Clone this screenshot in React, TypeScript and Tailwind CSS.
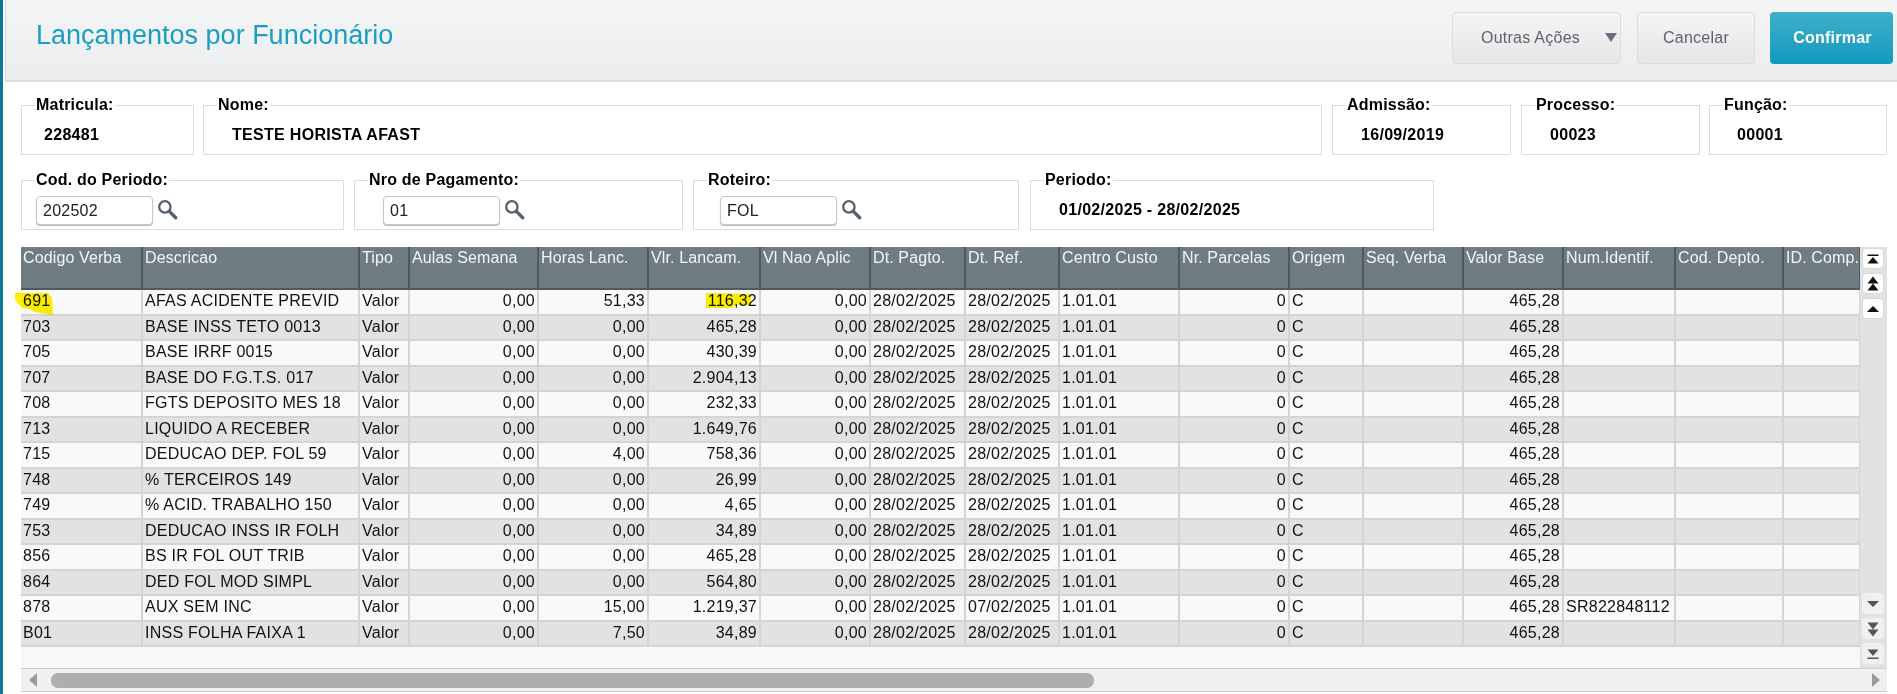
const cols = ["w-[121px]","w-[217px]","w-[50px]","w-[129px]","w-[110px]","w-[112px]","w-[110px]","w-[95px]","w-[94px]","w-[120px]","w-[110px]","w-[74px]","w-[100px]","w-[100px]","w-[112px]","w-[108px]","w-[77px]"];
const heads = ["Codigo Verba","Descricao","Tipo","Aulas Semana","Horas Lanc.","Vlr. Lancam.","Vl Nao Aplic","Dt. Pagto.","Dt. Ref.","Centro Custo","Nr. Parcelas","Origem","Seq. Verba","Valor Base","Num.Identif.","Cod. Depto.","ID. Comp."];
const right = new Set([3,4,5,6,10,13]);
const rows: any[] = [
["691","AFAS ACIDENTE PREVID","51,33","116,32","28/02/2025"],
["703","BASE INSS TETO 0013","0,00","465,28","28/02/2025"],
["705","BASE IRRF 0015","0,00","430,39","28/02/2025"],
["707","BASE DO F.G.T.S. 017","0,00","2.904,13","28/02/2025"],
["708","FGTS DEPOSITO MES 18","0,00","232,33","28/02/2025"],
["713","LIQUIDO A RECEBER","0,00","1.649,76","28/02/2025"],
["715","DEDUCAO DEP. FOL 59","4,00","758,36","28/02/2025"],
["748","% TERCEIROS 149","0,00","26,99","28/02/2025"],
["749","% ACID. TRABALHO 150","0,00","4,65","28/02/2025"],
["753","DEDUCAO INSS IR FOLH","0,00","34,89","28/02/2025"],
["856","BS IR FOL OUT TRIB","0,00","465,28","28/02/2025"],
["864","DED FOL MOD SIMPL","0,00","564,80","28/02/2025"],
["878","AUX SEM INC","15,00","1.219,37","07/02/2025","SR822848112"],
["B01","INSS FOLHA FAIXA 1","7,50","34,89","28/02/2025"],
];

function Label({text}:{text:string}){
  return <span className="absolute left-[13px] top-[-9px] bg-white px-[1px] text-[16px] leading-[16px] font-bold tracking-[0.2px] text-black whitespace-nowrap">{text}</span>;
}
function Field({label,value,w,indent}:{label:string;value:string;w:string;indent:string}){
  return <div className={`${w} h-[50px] border border-[#dcdcdc] relative shrink-0 ${indent} pt-[19px]`}>
    <Label text={label}/>
    <div className="text-[16px] font-bold tracking-[0.3px] text-black leading-[20px] whitespace-nowrap">{value}</div>
  </div>;
}
function Lens(){
  return <svg width="21" height="21" viewBox="0 0 20 20" className="ml-[4px] shrink-0 mb-[2px]"><circle cx="7.5" cy="7.5" r="5.4" fill="#fff" stroke="#556070" strokeWidth="2.2"/><path d="M11.8 11.8l6 6" stroke="#556070" strokeWidth="3.2" strokeLinecap="round"/></svg>;
}
function Search({label,value,w,indent}:{label:string;value:string;w:string;indent:string}){
  return <div className={`${w} h-[50px] border border-[#dcdcdc] relative shrink-0 ${indent} pt-[15px]`}>
    <Label text={label}/>
    <div className="flex items-center">
      <div className="w-[117px] h-[29px] border border-[#c4c8cc] rounded-[4px] bg-white text-[16px] tracking-[0.25px] leading-[27px] px-[6px] text-[#222] shadow-[0_1px_1px_#bbb]">{value}</div>
      <Lens/>
    </div>
  </div>;
}
function SBtn({d,light}:{d:string;light?:boolean}){
  return <div className={`w-[22px] h-[21px] rounded-[4px] flex items-center justify-center ${light?"bg-[#f0f0f0]":"bg-white border border-[#d8d8d8]"}`}>
    <svg width="16" height="16" viewBox="0 0 16 16"><path d={d} fill={light?"#555":"#111"}/></svg>
  </div>;
}
export default function App(){
  return <div className="w-[1897px] h-[694px] overflow-hidden flex bg-white" style={{fontFamily:'"Liberation Sans", Arial, sans-serif'}}>
    <div className="w-[3px] bg-[#0d7893] shrink-0"/>
    <div className="w-[2px] bg-white shrink-0"/>
    <div className="flex-1 min-w-0 flex flex-col">
      <header className="h-[82px] shrink-0 border-b-2 border-l border-b-[#dedede] border-l-[#c9d6ee] bg-gradient-to-b from-[#f4f5f5] to-[#ecedef] flex items-start justify-between pl-[30px] pr-[4px]">
        <h1 className="text-[27px] leading-[32px] mt-[19px] text-[#1a9fc1] font-normal">Lançamentos por Funcionário</h1>
        <div className="flex mt-[12px]">
          <button className="relative w-[169px] h-[52px] rounded-[4px] border border-[#dcdcdc] bg-gradient-to-b from-[#f5f5f5] to-[#e6e6e6] text-[16px] tracking-[0.25px] text-[#5b6270] text-left pl-[28px]">Outras Ações
            <span className="absolute right-[3px] top-[20px] border-x-[6px] border-x-transparent border-t-[9px] border-t-[#6a7080]"/>
          </button>
          <button className="ml-[16px] w-[118px] h-[52px] rounded-[4px] border border-[#dcdcdc] bg-gradient-to-b from-[#f5f5f5] to-[#e6e6e6] text-[16px] tracking-[0.25px] text-[#5b6270]">Cancelar</button>
          <button className="ml-[15px] w-[123px] h-[52px] rounded-[4px] bg-gradient-to-b from-[#3cafca] to-[#0f9abd] text-[16px] tracking-[0.25px] font-bold text-white pl-[2px]">Confirmar</button>
        </div>
      </header>
      <div className="flex mt-[23px] ml-[16px]">
        <Field label="Matricula:" value="228481" w="w-[173px]" indent="pl-[22px]"/>
        <div className="ml-[9px]"><Field label="Nome:" value="TESTE HORISTA AFAST" w="w-[1119px]" indent="pl-[28px]"/></div>
        <div className="ml-[10px]"><Field label="Admissão:" value="16/09/2019" w="w-[179px]" indent="pl-[28px]"/></div>
        <div className="ml-[10px]"><Field label="Processo:" value="00023" w="w-[179px]" indent="pl-[28px]"/></div>
        <div className="ml-[9px]"><Field label="Função:" value="00001" w="w-[178px]" indent="pl-[27px]"/></div>
      </div>
      <div className="flex mt-[25px] ml-[16px]">
        <Search label="Cod. do Periodo:" value="202502" w="w-[323px]" indent="pl-[14px]"/>
        <div className="ml-[10px]"><Search label="Nro de Pagamento:" value="01" w="w-[329px]" indent="pl-[28px]"/></div>
        <div className="ml-[10px]"><Search label="Roteiro:" value="FOL" w="w-[326px]" indent="pl-[26px]"/></div>
        <div className="ml-[11px]"><Field label="Periodo:" value="01/02/2025 - 28/02/2025" w="w-[404px]" indent="pl-[28px]"/></div>
      </div>
      <div className="flex mt-[17px] ml-[16px] w-[1866px] h-[421px] relative shrink-0">
        <div className="w-[1839px] shrink-0 overflow-hidden bg-[#f8f8f8]">
          <table className="table-fixed border-collapse w-[1839px] text-[16px] text-[#111]">
            <colgroup>{cols.map((c,i)=><col key={i} className={c}/>)}</colgroup>
            <thead><tr className="h-[42px] bg-[#6f7d82]">{heads.map((h,i)=><th key={i} className="border-r-2 border-b-2 border-[#4f5a5e] font-normal text-left align-top text-[#f4f4f4] text-[16px] tracking-[0.12px] leading-[20px] pl-[2px] pt-[1px] overflow-hidden whitespace-nowrap">{h}</th>)}</tr></thead>
            <tbody>{rows.map((r,ri)=>{
              const cells=[r[0],r[1],"Valor","0,00",r[2],r[3],"0,00","28/02/2025",r[4],"1.01.01","0","C","","465,28",r[5]||"","",""];
              return <tr key={ri} className={`h-[25.5px] ${ri%2?"bg-[#e2e2e2]":"bg-[#f9f9f9]"}`}>{cells.map((c:string,i:number)=><td key={i} className={`border-r-2 border-b-2 border-[#d4d4d4] leading-[20px] tracking-[0.25px] px-[2px] pt-0 pb-[1px] whitespace-nowrap overflow-hidden ${right.has(i)?"text-right":""}`}>{c}</td>)}</tr>;
            })}</tbody>
          </table>
        </div>
        <div className="w-[27px] shrink-0 bg-[#e2e2e2] flex flex-col pl-[2px] pt-[1px]">
          <div className="flex flex-col gap-[4px]">
            <SBtn d="M2.5 3.5h11v1.4h-11zM8 6l5.5 6.5h-11z"/>
            <SBtn d="M8 0.5l5.5 7h-11zM8 7.5l5.5 7h-11z"/>
            <SBtn d="M8 5l6 6H2z"/>
          </div>
          <div className="flex flex-col gap-[4px] mt-auto mb-[4px]">
            <SBtn light d="M2 5h12l-6 6z"/>
            <SBtn light d="M2.5 1.5h11l-5.5 7zM2.5 8.5h11l-5.5 7z"/>
            <SBtn light d="M2.5 3.5h11L8 10zM2.5 11.5h11V13h-11z"/>
          </div>
        </div>
        <svg className="absolute left-[-6px] top-[46px] mix-blend-multiply" width="38" height="22" viewBox="0 0 38 22"><path d="M0 0L33 0L37 5L38 22L20 19L15 16L7 15L0 7Z" fill="#fff200"/></svg>
        <svg className="absolute left-[685px] top-[46px] mix-blend-multiply" width="45" height="15" viewBox="0 0 45 15"><path d="M0 0L45 1L45 12L28 12L26 15L0 15Z" fill="#fff200"/></svg>
      </div>
      <div className="ml-[16px] w-[1866px] h-[24px] flex items-center bg-[#f0f0f0] border-y border-[#cfcfcf] shrink-0">
        <span className="ml-[8px] border-y-[7px] border-y-transparent border-r-[8px] border-r-[#9a9a9a]"/>
        <div className="ml-[14px] w-[1043px] h-[15px] rounded-[7px] bg-[#aeaeae]"/>
        <span className="ml-auto mr-[7px] border-y-[7px] border-y-transparent border-l-[8px] border-l-[#9a9a9a]"/>
      </div>
    </div>
  </div>;
}
